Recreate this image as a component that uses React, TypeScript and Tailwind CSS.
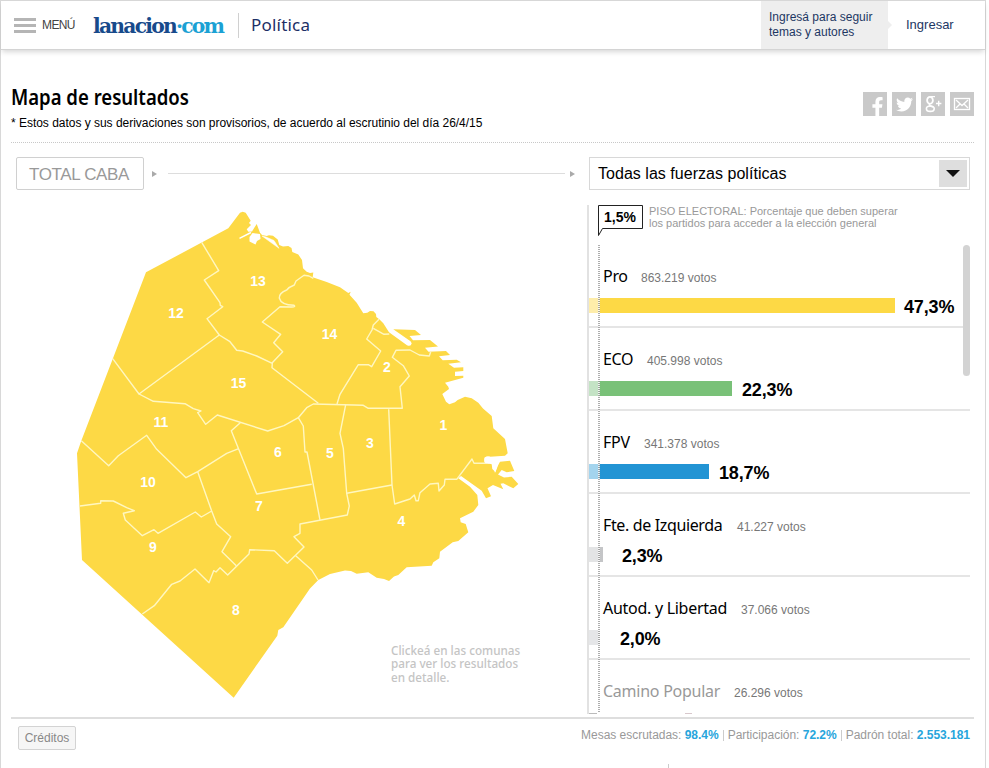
import React from "react";
import { FaFacebookF, FaTwitter } from "react-icons/fa";

const coast =
  "M146 272.3L228.3 228.3L240 212.7L242.7 211.8L245.7 212.7L250.7 220.7L249 223L251 225L246.7 229.3L248.3 231.7L252 231.5L256.7 224L260 232.7L262 235L266.7 236L269 235.3L273 235.7L277.7 239.5L279.3 245L283 246.5L288.3 246L291.5 248L292.3 252L298.3 254.5L302 260L303 268.3L306.7 271.7L310 273L313.3 272.5L312.7 277.3L326.7 282L340 287.3L348.3 293L350.7 291.8L349.5 294.7L356.7 302.7L363.3 313.3L367.3 312.7L370 311L373.5 311.2L376 314L376.3 317L379.3 319.3L383.3 323.3L389 332.3L407 345.3Q411 347 411.7 343.3L410.5 341.3L393.3 329.3L415 330L421 335L409.5 336L413 340.3L430 340L438 346.5L425 347.7L428.5 351.7L446 351L450 355L439 356.2L442.7 360.2L456.7 359.7L461 362.3L448.3 363.7L454 367.7L463.3 367.3V371L455 371.7V376L463.3 375.7V377.7L445 382.7L448.3 386.7L449 389L442.3 394L446 401.7L449.3 404.3L455 402.3L457.7 400L465 396.7L471.7 398.3L478.3 402.7L483 408.5L491.7 416L493.3 428.3L505 439L507.7 453.3L505 455.7L490 456.7L484.5 457.5L484.5 462.5L491.7 464.3L492.3 469L495.5 472L498 465.5L500 461.7L510 460.7L514.3 471L506.7 472.3L501.7 470L498 474.5L504 477.5L511.7 476.7L518.3 484L513.3 488.3L503.3 483.3L500.5 483.8L503.3 489.3L493 485L487.5 488.3L491 496.3L486 498.3L481.7 490.7L461 476L458.3 478.3L470 486.7L477.3 495L478.3 505L473.3 511.7L460 518.3L460.7 522.3L465.7 524L468.3 532.3L458.3 541L452.7 542.3L440 551.7L439.3 558.3L433.3 562.3L431.7 565.7L406.7 567.3L398.3 575L394 576.5L389 581L384 579L376.7 577.7L368.3 572.3L356.7 573.7L351 571L345 570.5L330 574L318.3 580L310 588.5L283.3 627.3L278.3 630L277.3 635.7L233.7 697.7L82 560L77 453.3L81.3 440.7Z";

const limits = [
  "M201.7 242.3L218.7 270.7L204.3 280L220 302.7L220.3 305.3L222.7 306.7L207 318.7L219.3 335L139 394L112.7 358.7",
  "M219.3 335L230 341.7L236.7 350.3L242.7 351L256.7 356L272.3 363.3L272 367.7L318.3 403.3",
  "M313.3 278.3L309 276L304 275.3L296 281L294.3 285Q289 287 286.7 290Q279 293 279.3 298Q281 305 294 305.3Q296 307 292 307L280 306.7L262.3 322L280.7 334.3L273.7 342.7L282.7 351.7L271.8 363.3",
  "M379 319.3L373.3 325L372 330L366.7 339L380.7 351L371.7 366.7L368.3 364.7H358.3L340 394.3L337 404",
  "M373.3 328.3L384 334.3L389.3 334",
  "M430.7 351.7L429.3 356L419.3 355L410 350L396 350.3L392.3 357.3L403.3 365.7L409.3 376L400 386.7L402.3 408.3H368.3L363.3 405.3L313.3 404L306.7 407.7L298.3 417.7L284 425.7L267.7 431L217.3 415L205.7 424.3L197.7 412.7L201 411L193.3 408.7L185 403.7L153.3 401.3L139 394",
  "M298.3 417.7L303.3 426L305 452H307L320 520",
  "M345.7 404.7L340 433.3L343.3 448.3L346.7 493.3L349.3 506L347.3 515L300 524V533.3L294 536.7L304 547L287.3 563.3L274.3 550.7L249.7 549.7L249 554L227.7 575L220 567.7L216 572L213.7 570.7L209 582.7L195 569L180 581L171.7 584.3L154.3 605.7L142.3 614",
  "M388.7 409.3L392 485L394.7 504L410 499L414.3 495L416 500.7H418.3L420 492.7L430 484L438.3 483.3L439 491L444.3 485L445 479.3H456.7L472 459L474 463.3H486.7",
  "M346.7 493.3L392 485",
  "M295.7 555.7L311.7 570L318 580",
  "M236.3 565.7L222 551.7L230.7 536.7L216.7 524L211.7 511L197.7 471.7",
  "M80 506L100.7 503.3V500.7L113.3 501L126.7 507.7L134.3 510.7L123.3 513.3L125.3 520L142.3 535.7L154 529.7L158 533.3L195.3 512L201.3 517L211.7 511",
  "M81.3 440.7L108.7 465.7L118.3 455.7L146.7 435.3L156.7 449.3L186 477.7L197.7 471.7L226.7 453.3L238.7 448.7",
  "M240.3 422.7L231.3 430.7L256.7 494L311.7 484.3",
];

const comunas: [number, number, number][] = [
  [1, 443.5, 425], [2, 387, 367], [3, 370, 443], [4, 401.5, 521], [5, 330, 452.5],
  [6, 278, 451.5], [7, 259, 505.5], [8, 236, 609.5], [9, 153, 547], [10, 148, 482],
  [11, 161, 422], [12, 176, 313], [13, 258, 281], [14, 329.5, 333.5], [15, 238.5, 383],
];

const rows = [
  { name: "Pro", votes: "863.219", pct: "47,3%", w: 307, pale: "bg-[#feedaa]", fill: "bg-[#fdd945]", gap: "ml-[9px]", nameBox: "w-[38px]", tone: "text-black tracking-[-0.3px]" },
  { name: "ECO", votes: "405.998", pct: "22,3%", w: 144, pale: "bg-[#c4e3c5]", fill: "bg-[#79c178]", gap: "ml-[10px]", nameBox: "w-[44px]", tone: "text-black tracking-[-0.3px]" },
  { name: "FPV", votes: "341.378", pct: "18,7%", w: 121, pale: "bg-[#a3d4ee]", fill: "bg-[#2294d4]", gap: "ml-[10px]", nameBox: "w-[41px]", tone: "text-black tracking-[-0.3px]" },
  { name: "Fte. de Izquierda", votes: "41.227", pct: "2,3%", w: 15, pale: "bg-[#e3e4e5]", fill: "bg-[#c4c5c7]", gap: "ml-[19px]", nameBox: "w-[134px]", tone: "text-black tracking-[-0.36px]" },
  { name: "Autod. y Libertad", votes: "37.066", pct: "2,0%", w: 12, pale: "bg-[#e5e6e8]", fill: "bg-[#dcdddf]", gap: "ml-[20px]", nameBox: "w-[138px]", tone: "text-black tracking-[-0.28px]" },
  { name: "Camino Popular", votes: "26.296", pct: "", w: 0, pale: "", fill: "", gap: "", nameBox: "w-[131px]", tone: "text-[#999] tracking-[-0.25px]" },
];

function Header() {
  return (
    <header className="flex h-[49px] items-stretch border-b border-[#d4d4d4] shadow-[0_3px_5px_-1px_rgba(0,0,0,0.16)]">
      <div className="flex items-center pl-[13px]">
        <div className="flex w-[22px] flex-col gap-[3px]">
          <i className="h-[3px] bg-[#b5b5b5]" />
          <i className="h-[3px] bg-[#b5b5b5]" />
          <i className="h-[3px] bg-[#b5b5b5]" />
        </div>
        <span className="ml-[6px] w-[51px] text-[12px] tracking-[-0.6px] text-[#444]">MENÚ</span>
        <span className="w-[131px] origin-left scale-x-[1.125] whitespace-nowrap pt-[2px] font-['DejaVu_Serif_Condensed','DejaVu_Serif',serif] text-[20px] font-semibold tracking-[-1.55px] text-[#174a8b]">
          lanacion<span className="text-[#1ba1d4]">·com</span>
        </span>
        <i className="ml-[14px] h-[25px] w-px bg-[#d0d0d0]" />
        <span className="ml-[12px] font-['Noto_Sans',sans-serif] text-[17px] tracking-[0.2px] text-[#1c2f66]">Política</span>
      </div>
      <div className="ml-auto flex w-[127px] items-center bg-[#eee] pl-2 text-[12px] leading-[15.5px] text-[#1d3763]">
        Ingresá para seguir
        <br />
        temas y autores
      </div>
      <div className="flex w-[97px] items-center text-[13px] text-[#1d3763]">
        <i className="border-y-[4px] border-l-[4px] border-y-transparent border-l-[#eee]" />
        <span className="ml-[14px]">Ingresar</span>
      </div>
    </header>
  );
}

function Share() {
  const box = "flex h-[24px] w-[24px] items-center justify-center bg-[#c9c9c9] text-white";
  return (
    <div className="mt-[20px] flex gap-[5px]">
      <span className={box + " pl-[5px] pt-[4px]"}><FaFacebookF size={19} /></span>
      <span className={box}><FaTwitter size={17} /></span>
      <span className={box}>
        <svg width="24" height="24" viewBox="0 0 24 24" fill="none" stroke="white">
          <ellipse cx="9" cy="8.3" rx="2.9" ry="3.5" strokeWidth="1.8" />
          <ellipse cx="9.3" cy="16.7" rx="3.9" ry="2.7" strokeWidth="1.6" />
          <path d="M9.5 4.6H14M9 11.8Q7.3 13 9.5 14L12 15.2M15 11.5H20.4M17.7 8.8V14.2" strokeWidth="1.4" />
        </svg>
      </span>
      <span className={box}>
        <svg width="18" height="14" viewBox="0 0 18 14" fill="none" stroke="white" strokeWidth="1.3">
          <rect x="1.5" y="1.5" width="15" height="11" />
          <path d="M3 3L9 8.5L15 3M3 11L7 7M15 11L11 7" />
        </svg>
      </span>
    </div>
  );
}

function Map() {
  return (
    <svg className="block" width="575" height="518" viewBox="0 200 575 518">
      <path d={coast} fill="#fdd945" />
      <g fill="none" stroke="#fff7c0" strokeWidth="1.4" strokeLinejoin="round">
        {limits.map((d) => <path key={d} d={d} />)}
      </g>
      <g fill="#fff" stroke="#fff">
        <path d="M249.5 237L252.5 233L260 234L260.5 239L257 241L255.5 244.5L249.5 241.5Z" stroke="none" />
        <path d="M239.5 238.3L251 232.5" strokeWidth="1.5" />
        <path d="M262 236L279 248.3L274 240.5L266 237Z" strokeWidth="0.5" />
        <circle cx="488" cy="460" r="3.8" stroke="none" />
        <path d="M493 465L498 464L495 473Z" stroke="none" />
      </g>
      <g fill="#fff" textAnchor="middle" className="font-['Liberation_Sans',Arial,sans-serif] text-[14px] font-bold">
        {comunas.map(([n, x, y]) => <text key={n} x={x} y={y + 5}>{n}</text>)}
      </g>
    </svg>
  );
}

function Results() {
  return (
    <section className="-ml-px w-[383px]">
      <div className="ml-[2px] mt-[14px] flex h-[33px] w-[381px] items-center justify-between border border-[#d8d8d8] pl-[8px] pr-[2px] text-[16px] tracking-[0.03px] text-black">
        Todas las fuerzas políticas
        <span className="flex h-[27px] w-[28px] items-center justify-center bg-[#dedede]">
          <i className="border-x-[7px] border-t-[7px] border-x-transparent border-t-[#111]" />
        </span>
      </div>
      <div className="mt-[15px] h-[509px] border-l-2 border-[#e2e2e2]">
        <div className="flex h-[40px] pl-[9px]">
          <div className="relative h-[32px] w-[46px]">
            <svg width="46" height="32" viewBox="0 0 46 32" fill="none" stroke="#222" className="block">
              <path d="M0.5 0.5H44.5V23.5H4.5L0.5 30.5Z" />
            </svg>
            <b className="absolute left-[6px] top-[3px] text-[14px] leading-[18px]">1,5%</b>
          </div>
          <p className="ml-[5px] text-[11px] leading-[12px] text-[#999]">
            PISO ELECTORAL: Porcentaje que deben superar
            <br />
            los partidos para acceder a la elección general
          </p>
        </div>
        <div className="relative h-[469px] overflow-hidden">
          {rows.map((r) => (
            <div key={r.name} className="-ml-px h-[83px] border-b-2 border-[#e5e5e5] pt-[19px]">
              <div className="flex h-[24px] items-baseline whitespace-nowrap pl-[15px]">
                <span className={"font-['Noto_Sans',sans-serif] text-[16px] leading-[24px] " + r.nameBox + " " + r.tone}>{r.name}</span>
                <span className="text-[12px] text-[#777]">{r.votes} votos</span>
              </div>
              {r.w > 0 && (
                <div className="mt-[5px] flex h-[24px] items-center">
                  <i className={"h-[15px] w-[11px] " + r.pale} />
                  <i className={"h-[15px] " + r.fill} style={{ width: r.w - 11 }} />
                  <b className={"mt-[3px] text-[18px] leading-[24px] tracking-[-0.15px] text-black " + r.gap}>{r.pct}</b>
                </div>
              )}
            </div>
          ))}
          <i className="absolute left-[9px] top-0 h-[468px] w-[2px] bg-[repeating-linear-gradient(to_bottom,#999_0px,#999_1px,#fff_1px,#fff_2px)] opacity-80" />
          <i className="absolute right-0 top-0 h-[131px] w-[7px] rounded-full bg-[#d3d3d3]" />
          <i className="absolute bottom-0 left-0 h-px w-[8px] bg-[#bbb]" />
          <i className="absolute bottom-0 left-[96px] h-px w-[7px] bg-[#d8c8cc]" />
        </div>
      </div>
    </section>
  );
}

export default function App() {
  return (
    <div className="flex h-[768px] w-[989px] flex-col overflow-hidden bg-white font-['Liberation_Sans',Arial,sans-serif]">
      <div className="h-[768px] w-[986px] border-l border-r border-t border-[#d8d8d8]">
        <Header />
        <main className="ml-[10px] w-[963px]">
          <div className="flex h-[93px] justify-between border-b border-dotted border-[#c8c8c8] pt-[22px]">
            <div className="pt-[10px]">
              <h1 className="origin-left scale-x-[0.883] whitespace-nowrap font-['Noto_Sans',sans-serif] text-[21px] font-semibold leading-[30px] text-black">Mapa de resultados</h1>
              <p className="mt-[4px] text-[12px] leading-[14px] tracking-[-0.025px] text-black">* Estos datos y sus derivaciones son provisorios, de acuerdo al escrutinio del día 26/4/15</p>
            </div>
            <Share />
          </div>
          <div className="flex h-[576px] border-b-2 border-[#dedede]">
            <div className="relative w-[577px]">
              <div className="flex h-[57px] items-center pl-[5px] pt-[4px]">
                <span className="flex h-[33px] w-[128px] items-center justify-center rounded-[2px] border border-[#d0d0d0] pr-[2px] pt-[2px] text-[17px] tracking-[-0.35px] text-[#999]">TOTAL CABA</span>
                <i className="ml-[8px] border-y-[3.5px] border-l-[5px] border-y-transparent border-l-[#aaa]" />
                <i className="ml-[11px] h-px w-[397px] bg-[#ddd]" />
                <i className="ml-[5px] border-y-[3.5px] border-l-[5px] border-y-transparent border-l-[#aaa]" />
              </div>
              <div className="-ml-[11px]"><Map /></div>
              <p className="absolute left-[380px] top-[501px] w-[160px] origin-left scale-x-[0.975] font-['Noto_Sans',sans-serif] text-[12px] font-medium leading-[13.3px] text-[#c4c4c4]">
                Clickeá en las comunas
                <br />
                para ver los resultados
                <br />
                en detalle.
              </p>
            </div>
            <Results />
          </div>
          <footer className="flex items-start justify-between pl-[7px] pr-[4px]">
            <button className="mt-[7px] h-[24px] w-[58px] rounded-[2px] border border-[#d3d3d3] bg-[#f6f6f6] text-[12px] text-[#888]">Créditos</button>
            <div className="mt-[9px] flex items-center gap-[4px] whitespace-nowrap text-[12px] leading-[14px] tracking-[-0.02px] text-[#999]">
              <span>Mesas escrutadas: <b className="text-[#27a5dc]">98.4%</b></span>
              <i className="h-[11px] w-px bg-[#ccc]" />
              <span>Participación: <b className="text-[#27a5dc]">72.2%</b></span>
              <i className="h-[11px] w-px bg-[#ccc]" />
              <span>Padrón total: <b className="text-[#27a5dc]">2.553.181</b></span>
            </div>
          </footer>
          <i className="ml-[657px] mt-[14px] block h-[5px] w-px bg-[#ccc]" />
        </main>
      </div>
    </div>
  );
}
